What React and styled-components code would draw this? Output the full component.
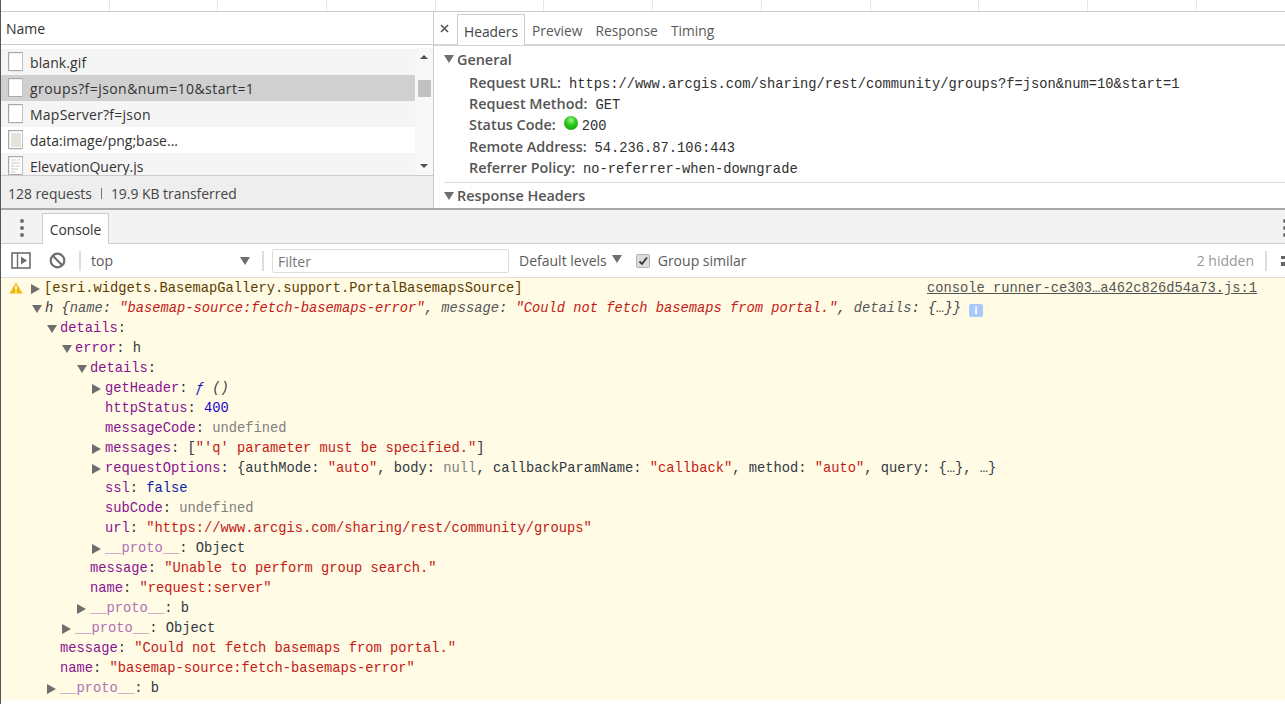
import React from "react";
import styled, { createGlobalStyle } from "styled-components";

const UI = `"Open Sans", "Noto Sans", "Liberation Sans", sans-serif`;
const MONO = `"Liberation Mono", "DejaVu Sans Mono", monospace`;

const Global = createGlobalStyle`
  html, body { margin: 0; padding: 0; background: #fff; overflow: hidden; }
  * { box-sizing: border-box; }
`;

const Page = styled.div`
  width: 1285px; height: 704px; overflow: hidden; display: flex; flex-direction: column;
  background: #fff; font-family: ${UI}; border-left: 1px solid #55585a;
`;
const TopStrip = styled.div`
  height: 12px; flex: none; display: grid; grid-template-columns: repeat(12, 108.7px);
  border-bottom: 1px solid #ccc;
`;
const StripCell = styled.div`border-right: 1px solid #e6e6e6;`;

const Network = styled.div`
  height: 198px; flex: none; display: flex; border-bottom: 2px solid #a8a8a8;
`;
const Left = styled.div`
  width: 433px; flex: none; display: flex; flex-direction: column; border-right: 1px solid #ccc;
`;
const NameHead = styled.div`
  height: 33px; flex: none; display: flex; align-items: center; padding-left: 5px;
  border-bottom: 1px solid #ccc; font-size: 14px; color: #333;
`;
const ListWrap = styled.div`
  flex: 1; min-height: 0; display: flex; padding-top: 4px;
`;
const FileList = styled.div`flex: 1; overflow: hidden;`;
const FileRow = styled.div`
  height: 26px; display: flex; align-items: center; gap: 6px; padding-left: 7px;
  background: ${p => p.$sel ? "#d0d0d0" : p.$white ? "#fff" : "#f5f5f5"};
  font-size: 14px; color: #333; letter-spacing: ${p => p.$ls || 0}px;
`;
const Scroll = styled.div`
  width: 18px; flex: none; display: flex; flex-direction: column; align-items: center;
  background: #f8f8f8; margin-top: -1px;
`;
const ScrollUp = styled.div`
  width: 0; height: 0; margin-top: 7px;
  border-left: 4px solid transparent; border-right: 4px solid transparent; border-bottom: 4px solid #505050;
`;
const ScrollThumb = styled.div`width: 13px; height: 17px; background: #c1c1c1; margin-top: 21px;`;
const ScrollDown = styled.div`
  width: 0; height: 0; margin-top: auto; margin-bottom: 7px;
  border-left: 4px solid transparent; border-right: 4px solid transparent; border-top: 4px solid #505050;
`;
const Status = styled.div`
  height: 33px; flex: none; display: flex; align-items: center; padding: 2px 0 0 7px; gap: 9px;
  background: #eee; border-top: 1px solid #ccc; font-size: 13.9px; color: #444;
`;
const Pipe = styled.span`width: 1px; height: 11px; background: #777;`;

const Right = styled.div`flex: 1; display: flex; flex-direction: column; min-width: 0;`;
const TabBar = styled.div`
  height: 34px; flex: none; display: flex; align-items: flex-end; border-bottom: 2px solid #d4d4d4;
  font-size: 13.8px; color: #5a5a5a;
`;
const Close = styled.div`
  width: 23px; height: 30px; flex: none; display: flex; align-items: center; justify-content: center;
  margin-bottom: 2px; padding: 3px 2px 0 0; color: #555;
`;
const Tab = styled.div`
  height: 31px; display: flex; align-items: center; padding: 3px ${p => p.$pad ?? 7}px 0;
  ${p => p.$active ? "border: 1px solid #ccc; border-bottom: 0; background: #fff; color: #444; margin-bottom: -1px;" : ""}
`;
const Section = styled.div`padding: 3px 0 0 10px; flex: 1; overflow: hidden;`;
const SecTitle = styled.div`
  display: flex; align-items: center; gap: 3px; height: 20px; font-size: 14.4px; font-weight: 600; color: #555;
`;
const Tri = styled.span`
  width: 0; height: 0; flex: none; display: inline-block;
  ${p => p.$dir === "right"
    ? `border-top: 5px solid transparent; border-bottom: 5px solid transparent; border-left: 9px solid ${p.$c || "#6e6e6e"};`
    : `border-left: 5px solid transparent; border-right: 5px solid transparent; border-top: 8px solid ${p.$c || "#6e6e6e"};`}
`;
const HeaderList = styled.div`
  padding: 3px 0 4px 25px; margin-bottom: 3px; border-bottom: 1px solid #ddd;
`;
const HeaderRow = styled.div`
  height: 21.2px; line-height: 21px; display: flex; align-items: baseline; white-space: nowrap; gap: 8px; color: #303942;
`;
const HKey = styled.span`font-size: 14.4px; font-weight: 600; color: #555;`;
const HVal = styled.span`font-family: ${MONO}; font-size: 13.75px; color: #303030;`;
const GreenDot = styled.span`
  width: 14px; height: 14px; border-radius: 50%; flex: none; margin-right: -4px; margin-bottom: 3px; align-self: center;
  background: radial-gradient(circle at 50% 30%, #9cf58c 0%, #2ecb20 40%, #0a9a00 100%);
`;

const ConsoleTabs = styled.div`
  height: 34px; flex: none; display: flex; align-items: flex-end; background: #f3f3f3;
  border-bottom: 1px solid #ccc;
`;
const Kebab = styled.div`
  width: 41px; height: 33px; flex: none; display: flex; flex-direction: column; gap: 3px;
  align-items: center; justify-content: center; padding-top: 3px;
`;
const Dot = styled.span`width: 4px; height: 4px; border-radius: 50%; background: #6e6e6e; flex: none;`;
const EdgeKebab = styled.div`
  width: 2px; height: 33px; flex: none; margin-left: auto; overflow: hidden;
  display: flex; flex-direction: column; gap: 3px; justify-content: center; padding-top: 3px;
`;
const ConsoleTab = styled.div`
  width: 67px; height: 31px; display: flex; align-items: center; justify-content: center;
  background: #fff; border: 1px solid #ccc; border-bottom: 0; font-size: 13.8px; color: #333; margin-bottom: -1px;
`;
const Toolbar = styled.div`
  height: 34px; flex: none; display: flex; align-items: center; border-bottom: 1px solid #ddd;
  font-size: 14px; color: #5a5a5a;
`;
const IconBtn = styled.div`
  width: ${p => p.$w}px; flex: none; display: flex; justify-content: center;
`;
const Sep = styled.div`width: 2px; height: 20px; flex: none; background: #ddd; margin-left: ${p => p.$ml || 0}px;`;
const TopSel = styled.div`
  width: 181px; flex: none; display: flex; align-items: center; justify-content: space-between;
  padding: 0 12px 0 10px; color: #5a5a5a;
`;
const FilterBox = styled.div`
  width: 237px; height: 24px; flex: none; margin-left: 8px; display: flex; align-items: center; padding: 1px 5px 0;
  border: 1px solid #ddd; border-radius: 2px; color: #777;
`;
const Levels = styled.div`
  display: flex; align-items: center; gap: 5px; margin-left: 10px;
`;
const LevelTri = styled(Tri)`margin-bottom: 4px;`;
const CheckBox = styled.div`
  width: 14px; height: 14px; flex: none; margin-left: 14px; display: flex; align-items: center; justify-content: center;
  background: #dcdcdc; border: 1px solid #b5b5b5; border-radius: 2px;
`;
const CheckLabel = styled.span`margin-left: 8px;`;
const Hidden = styled.span`margin-left: auto; color: #999; margin-right: 11px;`;
const GearCrop = styled.div`width: 18px; flex: none; overflow: hidden; display: flex; justify-content: flex-end;`;

const ConsoleBody = styled.div`
  height: 422px; flex: none; padding-top: 1px; background: #fffbe5; font-family: ${MONO}; font-size: 13.75px; color: #303942;
`;
const Row = styled.div`
  height: 20px; line-height: 20px; white-space: pre;
  padding-left: ${p => p.$x - 1}px; padding-right: 28px;
`;
const Caret = styled.span`
  display: inline-flex; width: 13px; margin-left: -13px; align-items: center; height: 20px; vertical-align: top;
`;
const WarnIcon = styled.span`
  display: inline-flex; width: 14px; margin-left: -35px; margin-right: 21px; height: 18px; align-items: center; vertical-align: top;
`;
const Key = styled.span`color: #881391;`;
const Proto = styled.span`color: #b071b6;`;
const Str = styled.span`color: #c41a16; font-style: ${p => p.$it ? "italic" : "normal"};`;
const Num = styled.span`color: #1c00cf;`;
const Kw = styled.span`color: #0d22aa; font-style: ${p => p.$it ? "italic" : "normal"};`;
const Undef = styled.span`color: #808080;`;
const Dim = styled.span`font-style: italic; color: #404040;`;
const DimKey = styled.span`font-style: italic; color: #565656;`;
const Brown = styled.span`color: #5c3b00;`;
const SrcLink = styled.span`float: right; color: #555; text-decoration: underline;`;
const Info = styled.span`
  width: 14px; height: 13px; margin-left: 8px; border-radius: 2px; background: #abc8fb; color: #fff; vertical-align: -2px;
  font-size: 11px; font-weight: 700; display: inline-flex; align-items: center; justify-content: center; font-family: ${UI};
`;

function FileIcon({ kind }) {
  return (
    <svg width="16" height="20" viewBox="0 0 16 20" style={{ flex: "none" }}>
      <rect x="0.5" y="0.5" width="14" height="18" fill="#fff" stroke="#a8a8a8" />
      <rect x="1.5" y="1.5" width="13" height="18" fill="none" stroke="#ddd" strokeWidth="0.5" />
      {kind === "img" && <rect x="3" y="3" width="10" height="14" fill="#e6e4da" />}
      {kind === "js" && <path d="M3 4h5M9 4h3M3 7h9M3 10h4M8 10h4M3 13h7M3 16h4" stroke="#c8c8c8" strokeWidth="1.2" />}
    </svg>
  );
}

const Arrow = ({ open }) => (
  <Caret><Tri $dir={open ? "down" : "right"} $c="#6e6e6e" /></Caret>
);

export default function App() {
  return (
    <Page>
      <Global />
      <TopStrip>{Array.from({ length: 12 }, (_, i) => <StripCell key={i} />)}</TopStrip>
      <Network>
        <Left>
          <NameHead>Name</NameHead>
          <ListWrap>
            <FileList>
              <FileRow $ls={0.1}><FileIcon />blank.gif</FileRow>
              <FileRow $sel $ls={0.43}><FileIcon />groups?f=json&amp;num=10&amp;start=1</FileRow>
              <FileRow $ls={0.25}><FileIcon />MapServer?f=json</FileRow>
              <FileRow $white><FileIcon kind="img" />data:image/png;base...</FileRow>
              <FileRow><FileIcon kind="js" />ElevationQuery.js</FileRow>
            </FileList>
            <Scroll><ScrollUp /><ScrollThumb /><ScrollDown /></Scroll>
          </ListWrap>
          <Status>128 requests<Pipe />19.9 KB transferred</Status>
        </Left>
        <Right>
          <TabBar>
            <Close>
              <svg width="9" height="9" viewBox="0 0 9 9"><path d="M1 1l7 7M8 1l-7 7" stroke="#555" strokeWidth="1.6" /></svg>
            </Close>
            <Tab $active $pad={6}>Headers</Tab>
            <Tab $pad={7}>Preview</Tab>
            <Tab $pad={6}>Response</Tab>
            <Tab $pad={7}>Timing</Tab>
          </TabBar>
          <Section>
            <SecTitle><Tri />General</SecTitle>
            <HeaderList>
              <HeaderRow><HKey>Request URL:</HKey><HVal>https://www.arcgis.com/sharing/rest/community/groups?f=json&amp;num=10&amp;start=1</HVal></HeaderRow>
              <HeaderRow><HKey>Request Method:</HKey><HVal>GET</HVal></HeaderRow>
              <HeaderRow><HKey>Status Code:</HKey><GreenDot /><HVal>200</HVal></HeaderRow>
              <HeaderRow><HKey>Remote Address:</HKey><HVal>54.236.87.106:443</HVal></HeaderRow>
              <HeaderRow><HKey>Referrer Policy:</HKey><HVal>no-referrer-when-downgrade</HVal></HeaderRow>
            </HeaderList>
            <SecTitle><Tri />Response Headers</SecTitle>
          </Section>
        </Right>
      </Network>
      <ConsoleTabs>
        <Kebab><Dot /><Dot /><Dot /></Kebab>
        <ConsoleTab>Console</ConsoleTab>
        <EdgeKebab><Dot /><Dot /><Dot /></EdgeKebab>
      </ConsoleTabs>
      <Toolbar>
        <IconBtn $w={40}>
          <svg width="20" height="17" viewBox="0 0 20 17">
            <rect x="1" y="1" width="18" height="15" fill="none" stroke="#6e6e6e" strokeWidth="1.6" />
            <path d="M6.5 1v15" stroke="#6e6e6e" strokeWidth="1.4" />
            <path d="M10 4.5l6 4-6 4z" fill="#6e6e6e" />
          </svg>
        </IconBtn>
        <IconBtn $w={32}>
          <svg width="17" height="17" viewBox="0 0 17 17">
            <circle cx="8.5" cy="8.5" r="6.8" fill="none" stroke="#6e6e6e" strokeWidth="2.2" />
            <path d="M3.8 3.8l9.4 9.4" stroke="#6e6e6e" strokeWidth="2.2" />
          </svg>
        </IconBtn>
        <Sep $ml={6} />
        <TopSel>top<Tri /></TopSel>
        <Sep />
        <FilterBox>Filter</FilterBox>
        <Levels>Default levels<LevelTri /></Levels>
        <CheckBox>
          <svg width="10" height="10" viewBox="0 0 10 10"><path d="M1.5 5.5l2.5 2.5 5-6.5" fill="none" stroke="#333" strokeWidth="1.8" /></svg>
        </CheckBox>
        <CheckLabel>Group similar</CheckLabel>
        <Hidden>2 hidden</Hidden>
        <Sep />
        <GearCrop>
          <svg width="6" height="16" viewBox="0 0 6 16"><path d="M2 3h4v3H2zM2 9h4v4H2z" fill="#666" /></svg>
        </GearCrop>
      </Toolbar>
      <ConsoleBody>
        <Row $x={44}>
          <WarnIcon>
            <svg width="14" height="12" viewBox="0 0 14 12">
              <path d="M7 0.5L13.5 11.5H0.5z" fill="#f2b90c" />
              <path d="M7 3.5v4.5M7 9v1.5" stroke="#fff" strokeWidth="1.5" />
            </svg>
          </WarnIcon>
          <Arrow /><Brown>[esri.widgets.BasemapGallery.support.PortalBasemapsSource]</Brown>
          <SrcLink>console_runner-ce303…a462c826d54a73.js:1</SrcLink>
        </Row>
        <Row $x={45}>
          <Arrow open /><Dim>h {"{"}</Dim><DimKey>name</DimKey><Dim>: </Dim><Str $it>"basemap-source:fetch-basemaps-error"</Str><Dim>, </Dim>
          <DimKey>message</DimKey><Dim>: </Dim><Str $it>"Could not fetch basemaps from portal."</Str><Dim>, </Dim><DimKey>details</DimKey><Dim>: {"{…}}"}</Dim><Info>i</Info>
        </Row>
        <Row $x={60}><Arrow open /><Key>details</Key>:</Row>
        <Row $x={75}><Arrow open /><Key>error</Key>: h</Row>
        <Row $x={90}><Arrow open /><Key>details</Key>:</Row>
        <Row $x={105}><Arrow /><Key>getHeader</Key>: <Kw $it>ƒ</Kw> <Dim>()</Dim></Row>
        <Row $x={105}><Key>httpStatus</Key>: <Num>400</Num></Row>
        <Row $x={105}><Key>messageCode</Key>: <Undef>undefined</Undef></Row>
        <Row $x={105}><Arrow /><Key>messages</Key>: [<Str>"'q' parameter must be specified."</Str>]</Row>
        <Row $x={105}><Arrow /><Key>requestOptions</Key>: {"{"}authMode: <Str>"auto"</Str>, body: <Undef>null</Undef>, callbackParamName: <Str>"callback"</Str>, method: <Str>"auto"</Str>, query: {"{…}"}, …{"}"}</Row>
        <Row $x={105}><Key>ssl</Key>: <Kw>false</Kw></Row>
        <Row $x={105}><Key>subCode</Key>: <Undef>undefined</Undef></Row>
        <Row $x={105}><Key>url</Key>: <Str>"https://www.arcgis.com/sharing/rest/community/groups"</Str></Row>
        <Row $x={105}><Arrow /><Proto>__proto__</Proto>: Object</Row>
        <Row $x={90}><Key>message</Key>: <Str>"Unable to perform group search."</Str></Row>
        <Row $x={90}><Key>name</Key>: <Str>"request:server"</Str></Row>
        <Row $x={90}><Arrow /><Proto>__proto__</Proto>: b</Row>
        <Row $x={75}><Arrow /><Proto>__proto__</Proto>: Object</Row>
        <Row $x={60}><Key>message</Key>: <Str>"Could not fetch basemaps from portal."</Str></Row>
        <Row $x={60}><Key>name</Key>: <Str>"basemap-source:fetch-basemaps-error"</Str></Row>
        <Row $x={60}><Arrow /><Proto>__proto__</Proto>: b</Row>
      </ConsoleBody>
    </Page>
  );
}
